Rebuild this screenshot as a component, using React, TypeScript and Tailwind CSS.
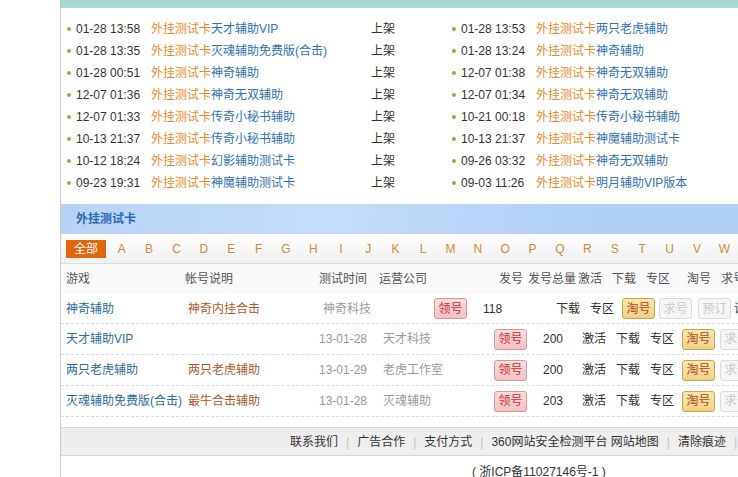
import type { ReactNode } from 'react';

const leftNews = [
  ['01-28 13:58', '天才辅助VIP'],
  ['01-28 13:35', '灭魂辅助免费版(合击)'],
  ['01-28 00:51', '神奇辅助'],
  ['12-07 01:36', '神奇无双辅助'],
  ['12-07 01:33', '传奇小秘书辅助'],
  ['10-13 21:37', '传奇小秘书辅助'],
  ['10-12 18:24', '幻影辅助测试卡'],
  ['09-23 19:31', '神魔辅助测试卡'],
];

const rightNews = [
  ['01-28 13:53', '两只老虎辅助'],
  ['01-28 13:24', '神奇辅助'],
  ['12-07 01:38', '神奇无双辅助'],
  ['12-07 01:34', '神奇无双辅助'],
  ['10-21 00:18', '传奇小秘书辅助'],
  ['10-13 21:37', '神魔辅助测试卡'],
  ['09-26 03:32', '神奇无双辅助'],
  ['09-03 11:26', '明月辅助VIP版本'],
];

const letters = 'ABCDEFGHIJKLMNOPQRSTUVW'.split('');

const rows = [
  { game: '天才辅助VIP', desc: '', time: '13-01-28', company: '天才科技', count: '200' },
  { game: '两只老虎辅助', desc: '两只老虎辅助', time: '13-01-29', company: '老虎工作室', count: '200' },
  { game: '灭魂辅助免费版(合击)', desc: '最牛合击辅助', time: '13-01-28', company: '灭魂辅助', count: '203' },
];

const footerLinks = ['联系我们', '广告合作', '支付方式', '360网站安全检测平台 网站地图', '清除痕迹'];

function NewsItem({ date, title }: { date: string; title: string }) {
  return (
    <div className="flex h-[22px] w-[385px] shrink-0 items-center">
      <span className="mr-[5px] h-[4px] w-[4px] rounded-full bg-[#8db43c]" />
      <span className="w-[75px] text-[#333]">{date}</span>
      <span className="w-[220px] whitespace-nowrap">
        <span className="text-[#ee8a2c]">外挂测试卡</span>
        <span className="text-[#2f72b5]">{title}</span>
      </span>
      <span className="text-[#333]">上架</span>
    </div>
  );
}

function Btn({ kind, children }: { kind: 'get' | 'tao' | 'off'; children: ReactNode }) {
  const styles = {
    get: 'border-[#d69a9c] bg-[linear-gradient(#fcdcdd,#f4c0c2)] text-[#cc3333]',
    tao: 'border-[#c8a458] bg-[linear-gradient(#fbe8ab,#efd185)] text-[#b8462a]',
    off: 'border-[#dcdcdc] bg-[#f6f6f6] text-[#c9c9c9]',
  };
  return (
    <span
      className={`inline-flex h-[21px] w-[33px] shrink-0 items-center justify-center rounded-[3px] border ${styles[kind]}`}
    >
      {children}
    </span>
  );
}

export default function App() {
  return (
    <div className="flex h-[477px] w-[738px] overflow-hidden bg-white font-['Liberation_Sans','Noto_Sans_CJK_SC',sans-serif] text-[12px] leading-[14px]">
      <div className="w-[60px] shrink-0" />
      <div className="w-[900px] shrink-0 border-l border-[#cbcbcb]">
        {/* top band */}
        <div className="h-[8px] bg-[linear-gradient(#a3d7d1,#addcd7)]" />

        {/* latest news */}
        <div className="pl-[6px] pt-[10px]">
          {leftNews.map((item, i) => (
            <div key={i} className="flex">
              <NewsItem date={item[0]} title={item[1]} />
              <NewsItem date={rightNews[i][0]} title={rightNews[i][1]} />
            </div>
          ))}
        </div>

        {/* section header */}
        <div className="mt-[10px] flex h-[30px] items-center bg-[linear-gradient(100deg,#b6d3f7_0%,#c6ddfa_30%,#b9d5f8_45%,#b2d0f6_60%,#b0cff6_100%)] pl-[15px] font-bold text-[#2d6ab3]">
          外挂测试卡
        </div>

        {/* letter filter */}
        <div className="flex h-[30px] items-center border-b border-[#dedede] bg-[linear-gradient(#ffffff,#f0f0f0)] pl-[5px]">
          <span className="flex h-[18px] w-[40px] items-center justify-center bg-[#e0670c] text-white">全部</span>
          <div className="ml-[2px] flex">
            {letters.map((l) => (
              <span key={l} className="w-[27.4px] text-center text-[#d58a35]">
                {l}
              </span>
            ))}
          </div>
        </div>

        {/* table header */}
        <div className="flex h-[30px] items-center bg-[#fafafa] pl-[5px] text-[#555]">
          <span className="w-[119px]">游戏</span>
          <span className="w-[134px]">帐号说明</span>
          <span className="w-[60px]">测试时间</span>
          <span className="w-[120px]">运营公司</span>
          <span className="w-[29px]">发号</span>
          <span className="w-[50px]">发号总量</span>
          <span className="w-[34px]">激活</span>
          <span className="w-[34px]">下载</span>
          <span className="w-[41px]">专区</span>
          <span className="w-[34px]">淘号</span>
          <span>求号</span>
        </div>

        {/* first row */}
        <div className="flex h-[30px] items-center border-b border-dashed border-[#dcdcdc] pl-[5px] text-[#333]">
          <span className="w-[122px] text-[#2b6c9c]">神奇辅助</span>
          <span className="w-[135px] text-[#b0581f]">神奇内挂合击</span>
          <span className="w-[111px] text-[#9a9a9a]">神奇科技</span>
          <Btn kind="get">领号</Btn>
          <span className="ml-[16px] w-[73px]">118</span>
          <span className="w-[34px]">下载</span>
          <span className="w-[32px]">专区</span>
          <Btn kind="tao">淘号</Btn>
          <span className="ml-[4px]">
            <Btn kind="off">求号</Btn>
          </span>
          <span className="ml-[6px]">
            <Btn kind="off">预订</Btn>
          </span>
          <span className="ml-[3px]">详</span>
        </div>

        {/* other rows */}
        {rows.map((r) => (
          <div
            key={r.game}
            className="flex h-[31px] items-center border-b border-dashed border-[#dcdcdc] pl-[5px] text-[#333]"
          >
            <span className="w-[122px] whitespace-nowrap text-[#2b6c9c]">{r.game}</span>
            <span className="w-[131px] text-[#b0581f]">{r.desc}</span>
            <span className="w-[64px] text-[#9a9a9a]">{r.time}</span>
            <span className="w-[111px] text-[#9a9a9a]">{r.company}</span>
            <Btn kind="get">领号</Btn>
            <span className="ml-[16px] w-[39px]">{r.count}</span>
            <span className="w-[34px]">激活</span>
            <span className="w-[34px]">下载</span>
            <span className="w-[32px]">专区</span>
            <Btn kind="tao">淘号</Btn>
            <span className="ml-[5px]">
              <Btn kind="off">求号</Btn>
            </span>
          </div>
        ))}

        {/* footer */}
        <div className="mt-[10px] flex h-[29px] items-center border-y border-[#d6d6d6] bg-[#eeeeee] pl-[229px] text-[#333]">
          {footerLinks.map((l) => (
            <span key={l} className="flex items-center whitespace-nowrap">
              {l}
              <span className="mx-[8px] text-[#c4c4c4]">|</span>
            </span>
          ))}
        </div>
        <div className="pl-[411px] pt-[9px] text-[#333]">( 浙ICP备11027146号-1 )</div>
      </div>
    </div>
  );
}
